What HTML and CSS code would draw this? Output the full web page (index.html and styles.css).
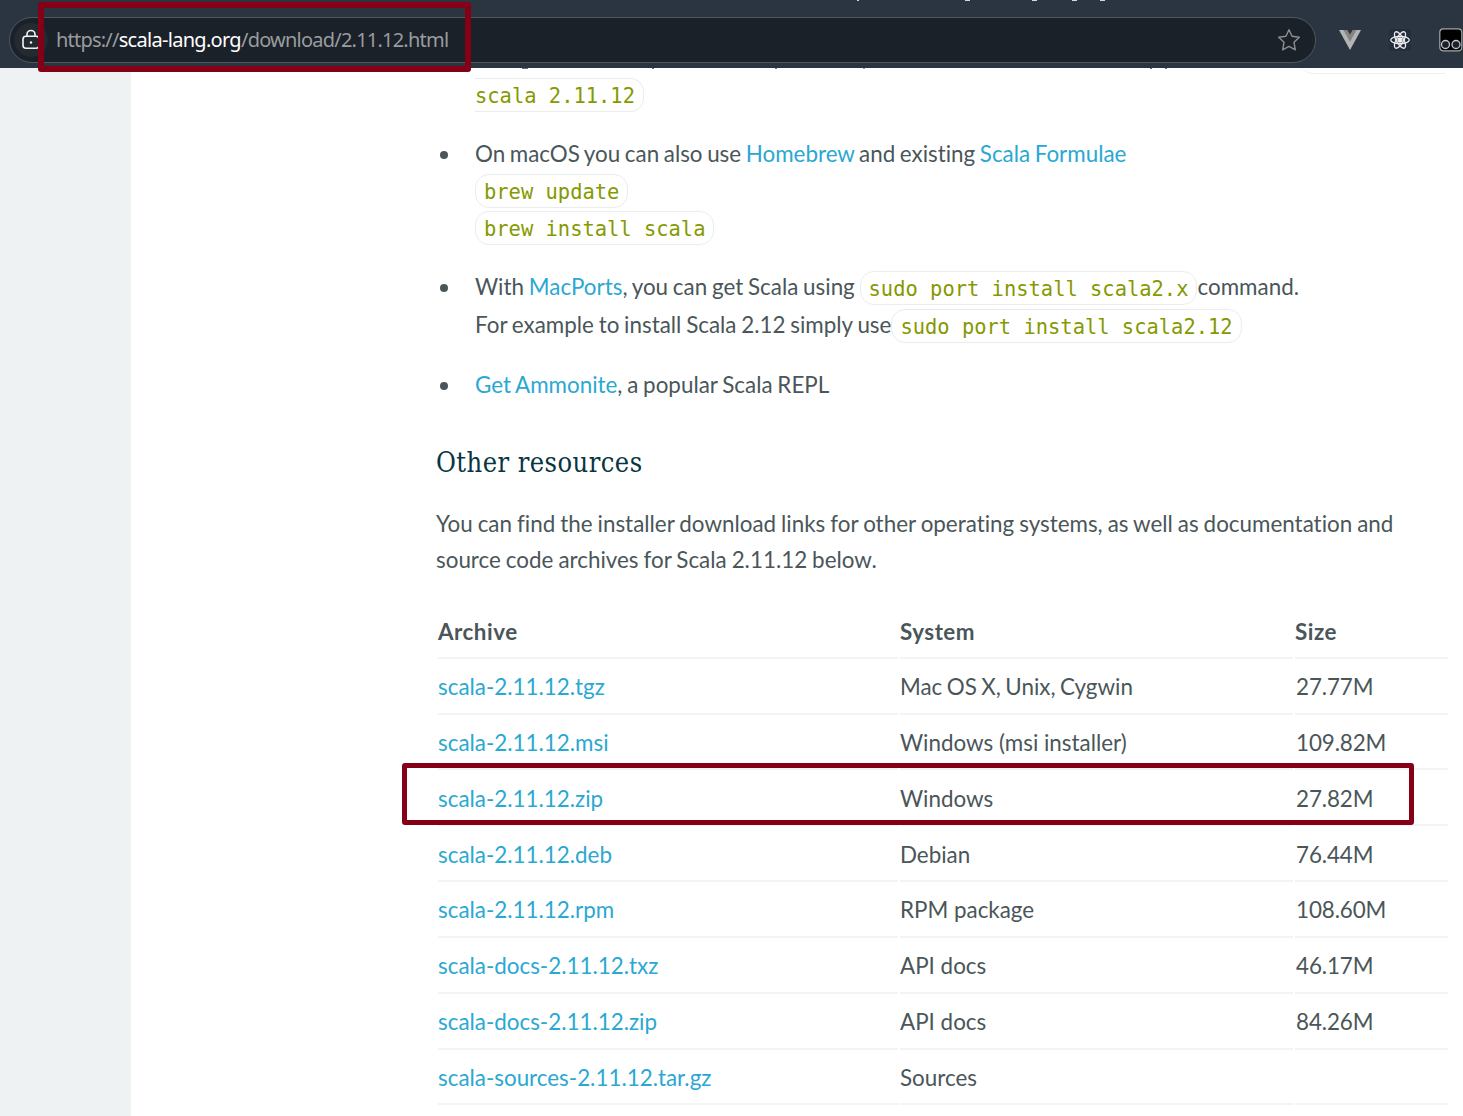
FILE: index.html
```html
<!DOCTYPE html>
<html lang="en">
<head>
<meta charset="utf-8">
<title>Scala 2.11.12</title>
<link rel="stylesheet" href="styles.css">
</head>
<body>
<header class="toolbar">
  <div class="address">
    <span class="lock"><svg width="20" height="22" viewBox="0 0 20 22" fill="none" stroke="#f2f3f3" stroke-width="1.6"><rect x="2" y="7.3" width="16" height="12" rx="3"/><path d="M6 7V5.5a4 4 0 0 1 8 0V7"/><circle cx="10" cy="13.5" r="1.2" fill="#f2f3f3" stroke="none"/></svg></span>
    <span class="url">https://<b>scala-lang.org</b>/download/2.11.12.html</span>
    <svg class="star" width="24" height="24" viewBox="0 0 24 24" fill="none" stroke="#8c8f92" stroke-width="1.4" stroke-linejoin="round"><path d="M12 1.7l3.1 6.6 7.2 1-5.3 5 1.3 7.5-6.3-3.4-6.3 3.4L7 14.3l-5.3-5 7.2-1z"/></svg>
  </div>
  <div class="extensions">
    <svg width="22" height="20" viewBox="0 0 22 20"><path d="M0 0h22L11 20z" fill="#b4b4b4"/><path d="M4.4 0h13.2L11 11.7z" fill="#858585"/><path d="M8.4 0h5.2L11 4.4z" fill="#2b3441"/></svg>
    <svg width="22" height="22" viewBox="0 0 22 22" fill="none" stroke="#eceeef" stroke-width="1.3"><rect width="22" height="22" fill="#242d3b" stroke="none"/><ellipse cx="11" cy="11" rx="9.3" ry="3.6"/><ellipse cx="11" cy="11" rx="9.3" ry="3.6" transform="rotate(60 11 11)"/><ellipse cx="11" cy="11" rx="9.3" ry="3.6" transform="rotate(120 11 11)"/><circle cx="11" cy="11" r="2" fill="#eceeef"/></svg>
    <svg width="24" height="24" viewBox="0 0 24 24"><rect x=".8" y=".8" width="22" height="22" rx="3.5" fill="#000" stroke="#a4a6a8" stroke-width="1.2"/><g fill="#17202b" stroke="#c6c8ca" stroke-width="1.3"><circle cx="6.5" cy="16.5" r="4"/><circle cx="17" cy="16.5" r="4"/></g></svg>
  </div>
</header>
<main class="page">
  <aside class="gutter"></aside>
  <article class="content">
    <ul class="tips">
      <li class="continued"><code class="tail">scala 2.11.12</code></li>
      <li class="brew">On macOS you can also use <a>Homebrew</a> and existing <a>Scala Formulae</a><br><code>brew update</code><br><code>brew install scala</code></li>
      <li class="ports">With <a>MacPorts</a>, you can get Scala using <code>sudo port install scala2.x</code>command.<br>For example to install Scala 2.12 simply use<code>sudo port install scala2.12</code></li>
      <li><a>Get Ammonite</a>, a popular Scala REPL</li>
    </ul>
    <h2>Other resources</h2>
    <p>You can find the installer download links for other operating systems, as well as documentation and source code archives for Scala 2.11.12 below.</p>
    <table>
      <colgroup><col class="c1"><col class="c2"><col class="c3"></colgroup>
      <tr><th>Archive</th><th>System</th><th>Size</th></tr>
      <tr><td><a>scala-2.11.12.tgz</a></td><td class="tight">Mac OS X, Unix, Cygwin</td><td>27.77M</td></tr>
      <tr><td><a>scala-2.11.12.msi</a></td><td>Windows (msi installer)</td><td>109.82M</td></tr>
      <tr><td><a>scala-2.11.12.zip</a></td><td>Windows</td><td>27.82M</td></tr>
      <tr><td><a>scala-2.11.12.deb</a></td><td>Debian</td><td>76.44M</td></tr>
      <tr><td><a>scala-2.11.12.rpm</a></td><td>RPM package</td><td>108.60M</td></tr>
      <tr><td><a>scala-docs-2.11.12.txz</a></td><td>API docs</td><td>46.17M</td></tr>
      <tr><td><a>scala-docs-2.11.12.zip</a></td><td>API docs</td><td>84.26M</td></tr>
      <tr><td><a>scala-sources-2.11.12.tar.gz</a></td><td>Sources</td><td></td></tr>
    </table>
  </article>
</main>
<svg class="edges" width="1463" height="76" viewBox="0 0 1463 76"><path d="M857 .5h2M965 .5h5M1032 .5h5M1072 .5h5M1100 .5h5" stroke="#d5d8da"/><path d="M522 68.5h6M652 68.5h2M775 68.5h2M1150 68.5h2M1165 68.5h2" stroke="#65717a"/><path d="M863 68.5h2" stroke="#4ab0d4"/><path d="M1303 68.5q4 5 11 5h131" fill="none" stroke="#edf0f0"/></svg>
<div class="mark mark-url"></div>
<div class="mark mark-row"></div>
</body>
</html>
```
FILE: styles.css
```css
* { box-sizing: border-box; }
body { margin: 0; height: 1116px; overflow: hidden; position: relative; background: #fff; color: #4a5659; font: 22.4px/36px Lato, sans-serif; font-variant-ligatures: none; }
.toolbar { height: 68px; background: #2b3441; display: flex; align-items: flex-start; padding: 17px 0 0 9px; }
.address { flex: none; width: 1307px; height: 46px; border: 1.5px solid #50585d; border-radius: 23px; background: #1b2128; display: flex; align-items: center; padding: 0 14px 0 4px; }
.lock { width: 34px; height: 34px; border-radius: 50%; background: #242a31; display: flex; align-items: center; justify-content: center; }
.lock svg { margin-top: -1px; }
.url { margin-left: 8px; font: 20px/28px "Noto Sans", sans-serif; letter-spacing: -.78px; color: #999c9f; white-space: nowrap; }
.url b { font-weight: 400; color: #fff; letter-spacing: -.7px; }
.star { margin-left: auto; }
.extensions { flex: none; display: flex; align-items: center; height: 46px; margin-left: 23px; }
.extensions svg { flex: none; margin-right: 28px; }
.page { display: flex; height: 1048px; }
.gutter { flex: none; width: 131px; background: #eef2f3; }
.content { margin-left: 305px; width: 1015px; }
a { color: #2aa8d2; }
.tips { margin: 0; padding: 8px 0 0 39px; line-height: 37.2px; list-style: none; word-spacing: -.95px; }
.tips li { position: relative; margin-bottom: 21.9px; white-space: nowrap; }
.tips .brew { word-spacing: -1.15px; margin-bottom: 21.4px; }
.tips .ports { line-height: 38px; }
.tips li:not(.continued)::before { content: ""; position: absolute; left: -35px; top: 16px; width: 8px; height: 8px; border-radius: 50%; background: #4a5659; }
code { padding: 4.5px 8px 3.5px; border: 1px solid #e9edee; border-radius: 14px; color: #859900; font: 20.45px/1px "DejaVu Sans Mono", monospace; word-spacing: 0; }
.continued code, .brew code { position: relative; top: -1px; }
.tail { padding-left: 0; border-left: 0; border-radius: 0 14px 14px 0; }
h2 { margin: 37.5px 0 0; font: 400 27px/44px "DejaVu Serif Condensed", "DejaVu Serif", serif; letter-spacing: .45px; color: #073642; }
p { margin: 21px 0 0; word-spacing: -.75px; }
table { margin-top: 26px; width: 1014px; table-layout: fixed; border-spacing: 2px 0; }
.c1 { width: 460px; } .c2 { width: 393px; }
th, td { height: 55.85px; padding: 3px 0 0; text-align: left; border-bottom: 2px solid #f3f4f4; }
th { height: 55px; padding-top: 3px; letter-spacing: .5px; }
td:nth-child(3) { letter-spacing: -.1px; padding-left: 1px; }
.tight { word-spacing: -1.3px; }
.edges { position: absolute; left: 0; top: 0; }
.mark { position: absolute; border: 5px solid #850016; border-radius: 3px; }
.mark-url { left: 38px; top: 2px; width: 433px; height: 70px; border-width: 6px; }
.mark-row { left: 402px; top: 763px; width: 1012px; height: 62px; }
```
